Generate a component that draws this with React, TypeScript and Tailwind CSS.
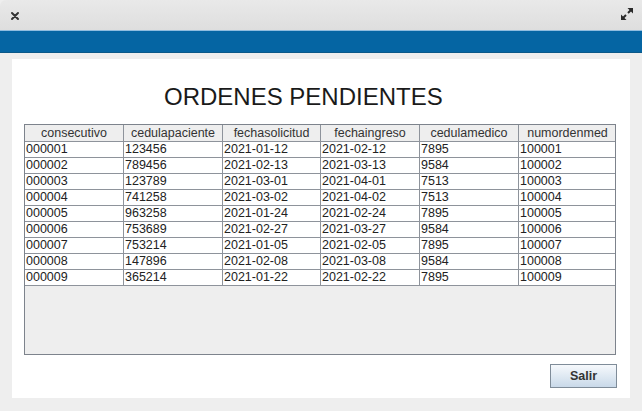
const columns = [
  "consecutivo",
  "cedulapaciente",
  "fechasolicitud",
  "fechaingreso",
  "cedulamedico",
  "numordenmed",
];

const rows = [
  ["000001", "123456", "2021-01-12", "2021-02-12", "7895", "100001"],
  ["000002", "789456", "2021-02-13", "2021-03-13", "9584", "100002"],
  ["000003", "123789", "2021-03-01", "2021-04-01", "7513", "100003"],
  ["000004", "741258", "2021-03-02", "2021-04-02", "7513", "100004"],
  ["000005", "963258", "2021-01-24", "2021-02-24", "7895", "100005"],
  ["000006", "753689", "2021-02-27", "2021-03-27", "9584", "100006"],
  ["000007", "753214", "2021-01-05", "2021-02-05", "7895", "100007"],
  ["000008", "147896", "2021-02-08", "2021-03-08", "9584", "100008"],
  ["000009", "365214", "2021-01-22", "2021-02-22", "7895", "100009"],
];

const gridCols = "grid grid-cols-[99px_99px_98px_99px_99px_97px]";

export default function App() {
  return (
    <div className="flex h-[411px] w-[642px] flex-col bg-[#eeeeee] font-['Liberation_Sans',Arial,sans-serif] text-[#222]">
      {/* window title bar */}
      <div className="flex h-[30px] items-center justify-between rounded-tl-[6px] bg-gradient-to-b from-[#e9e9e9] to-[#dedede] pl-[10px] pr-[8px]">
        <svg width="10" height="10" viewBox="0 0 10 10" className="mt-[1px]">
          <path d="M2 2 L8 8 M8 2 L2 8" stroke="#333" strokeWidth="2" strokeLinecap="round" />
        </svg>
        <svg width="14" height="14" viewBox="0 0 14 14" className="-mt-[2px]">
          <path d="M8 6 L11.5 2.5" stroke="#2a2a2a" strokeWidth="2" />
          <path d="M7.5 1 L13 1 L13 6.5 Z" fill="#2a2a2a" />
          <path d="M6 8 L2.5 11.5" stroke="#2a2a2a" strokeWidth="2" />
          <path d="M1 7.5 L1 13 L6.5 13 Z" fill="#2a2a2a" />
        </svg>
      </div>

      {/* blue band */}
      <div className="h-[23px] border-t border-t-[#8fbde0] border-b border-b-[#0b5888] bg-[#0565a3]" />

      <div className="px-[12px] pt-[6px]">
        <div className="flex h-[339px] w-[618px] flex-col bg-white px-[12px]">
          <div className="mt-[24px] h-[28px] pl-[140px] text-[24px] leading-[28px] text-[#1a1a1a]">
            ORDENES PENDIENTES
          </div>

          <div className="mt-[13px] h-[231px] w-[592px] border border-[#7d838c] bg-[#eeeeee] text-[12.5px] leading-[15px]">
            <div className={`${gridCols} h-[17px] border-b border-[#8e939b] bg-[#eeeeee]`}>
              {columns.map((c, i) => (
                <div
                  key={c}
                  className={`pt-[1px] text-center text-[#333] ${i < 5 ? "border-r border-[#8e939b]" : ""}`}
                >
                  {c}
                </div>
              ))}
            </div>
            {rows.map((r) => (
              <div key={r[0]} className={`${gridCols} h-[16px] border-b border-[#8e939b] bg-white`}>
                {r.map((v, i) => (
                  <div
                    key={i}
                    className={`pl-[1px] text-[#222] ${i < 5 ? "border-r border-[#8e939b]" : ""}`}
                  >
                    {v}
                  </div>
                ))}
              </div>
            ))}
          </div>

          <div className="mt-[9px] flex justify-end pr-[1px]">
            <button
              type="button"
              className="h-[24px] w-[67px] border border-[#7f8c99] bg-gradient-to-b from-[#f6f9fc] to-[#c9d9e9] text-[12.5px] font-bold text-[#333]"
            >
              Salir
            </button>
          </div>
        </div>
      </div>
    </div>
  );
}
